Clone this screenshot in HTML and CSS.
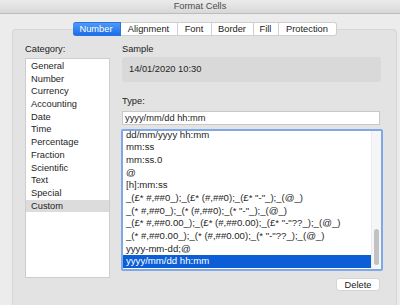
FILE: index.html
```html
<!DOCTYPE html>
<html>
<head>
<meta charset="utf-8">
<link rel="stylesheet" href="styles.css">
</head>
<body>
<div class="titlebar">Format Cells</div>
<div class="window">
  <div class="tabs">
    <div class="tab active">Number</div>
    <div class="tab">Alignment</div>
    <div class="tab">Font</div>
    <div class="tab">Border</div>
    <div class="tab">Fill</div>
    <div class="tab">Protection</div>
  </div>
  <div class="panel">
    <div class="col-left">
      <div class="label">Category:</div>
      <div class="catlist">
        <div class="row">General</div>
        <div class="row">Number</div>
        <div class="row">Currency</div>
        <div class="row">Accounting</div>
        <div class="row">Date</div>
        <div class="row">Time</div>
        <div class="row">Percentage</div>
        <div class="row">Fraction</div>
        <div class="row">Scientific</div>
        <div class="row">Text</div>
        <div class="row">Special</div>
        <div class="row cat-sel">Custom</div>
      </div>
    </div>
    <div class="col-right">
      <div class="label">Sample</div>
      <div class="sample">14/01/2020 10:30</div>
      <div class="label type-label">Type:</div>
      <div class="input">yyyy/mm/dd hh:mm</div>
      <div class="typelist">
        <div class="typerows">
          <div class="row">dd/mm/yyyy hh:mm</div>
          <div class="row">mm:ss</div>
          <div class="row">mm:ss.0</div>
          <div class="row">@</div>
          <div class="row">[h]:mm:ss</div>
          <div class="row">_(£* #,##0_);_(£* (#,##0);_(£* "-"_);_(@_)</div>
          <div class="row">_(* #,##0_);_(* (#,##0);_(* "-"_);_(@_)</div>
          <div class="row">_(£* #,##0.00_);_(£* (#,##0.00);_(£* "-"??_);_(@_)</div>
          <div class="row">_(* #,##0.00_);_(* (#,##0.00);_(* "-"??_);_(@_)</div>
          <div class="row">yyyy-mm-dd;@</div>
          <div class="row type-sel">yyyy/mm/dd hh:mm</div>
        </div>
        <div class="scrollbar"><div class="thumb"></div></div>
      </div>
      <div class="actions"><div class="button">Delete</div></div>
    </div>
  </div>
</div>
</body>
</html>
```
FILE: styles.css
```css
* { box-sizing: border-box; }
html, body {
  margin: 0;
  width: 400px;
  height: 305px;
  overflow: hidden;
  background: #ececec;
  font-family: "Liberation Sans", Arial, sans-serif;
  font-size: 9.3px;
  color: #1e1e1e;
}
.titlebar {
  height: 14px;
  line-height: 13px;
  text-align: center;
  color: #4d4d4d;
  background: linear-gradient(#ebebeb, #d8d8d8);
  border-bottom: 1px solid #bcbcbc;
}
.window {
  padding: 8px 3px 0 12px;
  height: 291px;
  display: flex;
  flex-direction: column;
}
.tabs {
  display: flex;
  justify-content: center;
  height: 14px;
  margin-bottom: -7px;
  position: relative;
  z-index: 1;
}
.tab {
  height: 14px;
  line-height: 13px;
  text-align: center;
  background: #fff;
  border: 1px solid #cfcfcf;
  border-left: none;
  color: #222;
}
.tab:last-child { border-radius: 0 3px 3px 0; }
.tab.active {
  background: linear-gradient(#4f9af8, #1c6ee9);
  border-color: #2a74e0;
  color: #fff;
  border-radius: 3px 0 0 3px;
  width: 48px;
}
.tab:nth-child(2) { width: 57px; }
.tab:nth-child(3) { width: 34px; }
.tab:nth-child(4) { width: 42px; }
.tab:nth-child(5) { width: 25px; }
.tab:nth-child(6) { width: 58px; }
.panel {
  flex: 1;
  background: #e3e3e3;
  border: 1px solid #d6d6d6;
  border-bottom: none;
  border-radius: 4px 4px 0 0;
  padding: 13px 14px 0 12px;
  display: grid;
  grid-template-columns: 85px 260px;
  column-gap: 12px;
  align-items: start;
}
.label {
  height: 12px;
  line-height: 12px;
  color: #222;
}
.catlist {
  margin-top: 3px;
  height: 220px;
  background: #fff;
  border: 1px solid #cdcdcd;
  padding-top: 1px;
}
.row {
  height: 12.7px;
  line-height: 12.7px;
  padding-left: 4px;
  white-space: nowrap;
}
.catlist .row { padding-left: 5px; }
.cat-sel { background: #dcdcdc; }
.sample {
  margin-top: 2px;
  height: 25px;
  width: 259px;
  line-height: 25px;
  padding-left: 7px;
  background: #d9d9d9;
  border-radius: 3px;
}
.type-label { margin-top: 13px; }
.input {
  margin-top: 4px;
  height: 14px;
  width: 258px;
  line-height: 12px;
  padding-left: 2px;
  background: #fff;
  border: 1px solid #c8c8c8;
}
.typelist {
  margin-top: 4px;
  margin-left: -1px;
  height: 142px;
  width: 262px;
  border: 2px solid #7fa8e8;
  border-radius: 2px;
  background: #fff;
  display: flex;
  overflow: hidden;
}
.typerows {
  flex: 1;
  margin-top: -2.4px;
  overflow: hidden;
  font-size: 9.6px;
}
.typerows .row { padding-left: 3px; }
.type-sel { background: #0c5ed6; color: #fff; }
.scrollbar {
  width: 10px;
  background: #f6f6f6;
  border-left: 1px solid #ececec;
  position: relative;
}
.thumb {
  position: absolute;
  left: 2px;
  width: 5px;
  top: 98px;
  height: 36px;
  background: #c2c2c2;
  border-radius: 3px;
}
.actions {
  margin-top: 7px;
  display: flex;
  justify-content: flex-end;
  padding-right: 2px;
}
.button {
  width: 44px;
  height: 13px;
  line-height: 12px;
  text-align: center;
  background: #fff;
  border: 1px solid #d4d4d4;
  border-radius: 3px;
  color: #222;
}
```
